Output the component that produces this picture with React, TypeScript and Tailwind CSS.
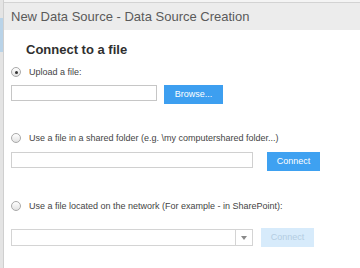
export default function App() {
  return (
    <div className="flex h-[268px] w-[360px] overflow-hidden bg-white font-['Liberation_Sans',Arial,sans-serif]">
      <div className="flex w-[3px] flex-col bg-[#e4e4e4]">
        <div className="mt-[18px] h-[34px] bg-[#b9d3e8]" />
      </div>
      <div className="w-px bg-[#cfcfcf]" />
      <div className="flex flex-1 flex-col">
        <div className="h-[2px] bg-[#f4f4f4]" />
        <div className="h-px bg-[#d3d3d3]" />
        <div className="flex h-[27px] items-center bg-[#ececec] pl-[7px] text-[13px] text-[#5a5a5a]">
          New Data Source - Data Source Creation
        </div>

        <div className="flex flex-col pl-[7px]">
          <h2 className="ml-[15px] mt-[11px] text-[13px] font-bold leading-[17px] text-[#2f2f2f]">
            Connect to a file
          </h2>

          <label className="mt-[9px] flex items-center gap-[8px] text-[9px] leading-[10px] text-[#444]">
            <Radio checked />
            Upload a file:
          </label>
          <div className="mt-[8px] flex items-start gap-[7px]">
            <div className="h-[16px] w-[146px] border border-[#c6c6c6] bg-white" />
            <button className="h-[19px] w-[59px] bg-[#3d9ff0] text-[9px] text-white">Browse...</button>
          </div>

          <label className="mt-[29px] flex items-center gap-[8px] text-[9px] leading-[10px] text-[#444]">
            <Radio />
            Use a file in a shared folder (e.g. \my computershared folder...)
          </label>
          <div className="mt-[9px] flex items-start gap-[14px]">
            <div className="h-[16px] w-[242px] border border-[#d0d0d0] bg-white" />
            <button className="h-[19px] w-[53px] bg-[#3ea1f1] text-[9px] text-white">Connect</button>
          </div>

          <label className="mt-[30px] flex items-center gap-[8px] text-[9px] leading-[10px] text-[#444]">
            <Radio />
            Use a file located on the network (For example - in SharePoint):
          </label>
          <div className="mt-[17px] flex items-center gap-[8px]">
            <div className="flex h-[17px] w-[242px] border border-[#d4d4d4] bg-white">
              <div className="flex-1" />
              <div className="flex w-[17px] items-center justify-center border-l border-[#d4d4d4]">
                <svg width="6" height="4" viewBox="0 0 6 4">
                  <path d="M0 0h6L3 4z" fill="#8a8a8a" />
                </svg>
              </div>
            </div>
            <button className="h-[19px] w-[53px] bg-[#d7ebfb] text-[9px] text-[#b4cde2]">Connect</button>
          </div>
        </div>
      </div>
    </div>
  )
}

function Radio({ checked = false }: { checked?: boolean }) {
  return (
    <span className="flex h-[10px] w-[10px] items-center justify-center rounded-full border border-[#a9a9a9] bg-gradient-to-b from-white to-[#e2e2e2]">
      {checked && <span className="h-[3px] w-[3px] rounded-full bg-[#333]" />}
    </span>
  )
}
